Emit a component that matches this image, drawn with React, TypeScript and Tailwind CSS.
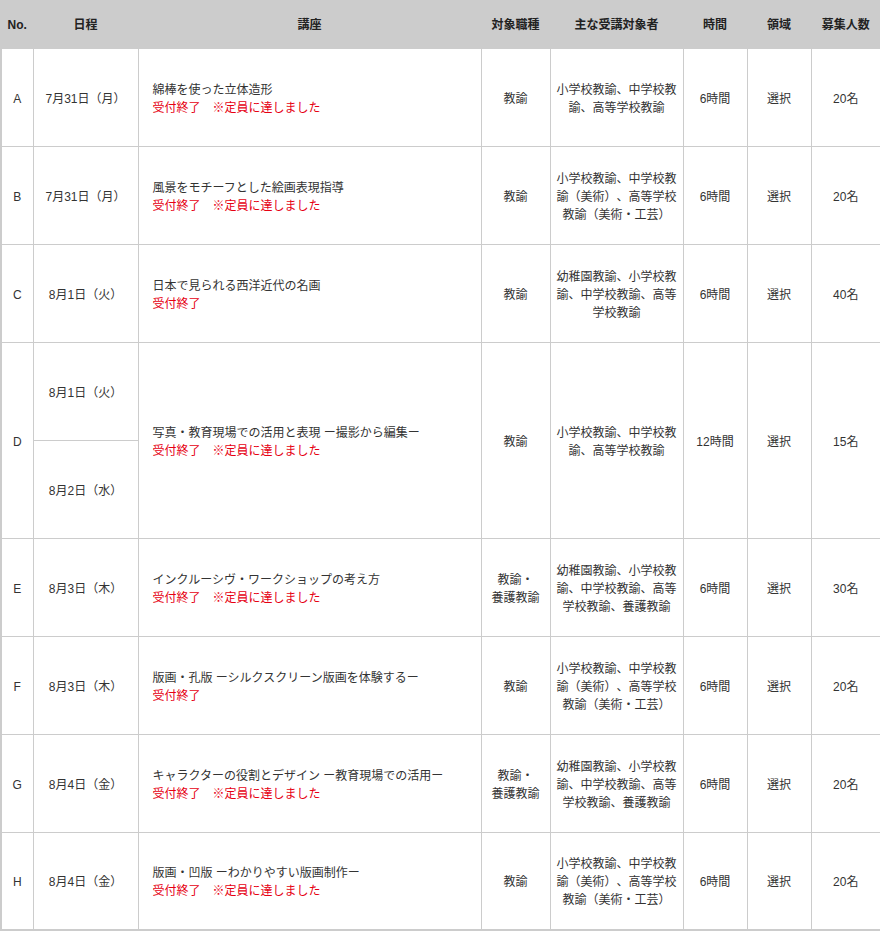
import React from 'react';

type Course = {
  no: string;
  dates: string[];
  title: string;
  status: string;
  jobs: string[];
  targets: string[];
  hours: string;
  area: string;
  capacity: string;
};

const FULL = '受付終了　※定員に達しました';
const CLOSED = '受付終了';

const courses: Course[] = [
  {
    no: 'A',
    dates: ['7月31日（月）'],
    title: '綿棒を使った立体造形',
    status: FULL,
    jobs: ['教諭'],
    targets: ['小学校教諭、中学校教', '諭、高等学校教諭'],
    hours: '6時間',
    area: '選択',
    capacity: '20名',
  },
  {
    no: 'B',
    dates: ['7月31日（月）'],
    title: '風景をモチーフとした絵画表現指導',
    status: FULL,
    jobs: ['教諭'],
    targets: ['小学校教諭、中学校教', '諭（美術）、高等学校', '教諭（美術・工芸）'],
    hours: '6時間',
    area: '選択',
    capacity: '20名',
  },
  {
    no: 'C',
    dates: ['8月1日（火）'],
    title: '日本で見られる西洋近代の名画',
    status: CLOSED,
    jobs: ['教諭'],
    targets: ['幼稚園教諭、小学校教', '諭、中学校教諭、高等', '学校教諭'],
    hours: '6時間',
    area: '選択',
    capacity: '40名',
  },
  {
    no: 'D',
    dates: ['8月1日（火）', '8月2日（水）'],
    title: '写真・教育現場での活用と表現 ー撮影から編集ー',
    status: FULL,
    jobs: ['教諭'],
    targets: ['小学校教諭、中学校教', '諭、高等学校教諭'],
    hours: '12時間',
    area: '選択',
    capacity: '15名',
  },
  {
    no: 'E',
    dates: ['8月3日（木）'],
    title: 'インクルーシヴ・ワークショップの考え方',
    status: FULL,
    jobs: ['教諭・', '養護教諭'],
    targets: ['幼稚園教諭、小学校教', '諭、中学校教諭、高等', '学校教諭、養護教諭'],
    hours: '6時間',
    area: '選択',
    capacity: '30名',
  },
  {
    no: 'F',
    dates: ['8月3日（木）'],
    title: '版画・孔版 ーシルクスクリーン版画を体験するー',
    status: CLOSED,
    jobs: ['教諭'],
    targets: ['小学校教諭、中学校教', '諭（美術）、高等学校', '教諭（美術・工芸）'],
    hours: '6時間',
    area: '選択',
    capacity: '20名',
  },
  {
    no: 'G',
    dates: ['8月4日（金）'],
    title: 'キャラクターの役割とデザイン ー教育現場での活用ー',
    status: FULL,
    jobs: ['教諭・', '養護教諭'],
    targets: ['幼稚園教諭、小学校教', '諭、中学校教諭、高等', '学校教諭、養護教諭'],
    hours: '6時間',
    area: '選択',
    capacity: '20名',
  },
  {
    no: 'H',
    dates: ['8月4日（金）'],
    title: '版画・凹版 ーわかりやすい版画制作ー',
    status: FULL,
    jobs: ['教諭'],
    targets: ['小学校教諭、中学校教', '諭（美術）、高等学校', '教諭（美術・工芸）'],
    hours: '6時間',
    area: '選択',
    capacity: '20名',
  },
];

const headers = ['No.', '日程', '講座', '対象職種', '主な受講対象者', '時間', '領域', '募集人数'];

const cell = 'border border-[#cccccc] text-center align-middle h-[98px] px-[4px] pt-[3px]';

function Lines({ lines }: { lines: string[] }) {
  return (
    <>
      {lines.map((l, i) => (
        <div key={i} className="whitespace-nowrap">{l}</div>
      ))}
    </>
  );
}

export default function App() {
  return (
    <div
      className="w-[880px] bg-white text-[12px] leading-[18px] text-[#333333] [text-spacing-trim:space-all]"
      style={{ fontFamily: '"Liberation Sans", "Noto Sans CJK JP", sans-serif' }}
    >
      <table className="w-[880px] table-fixed border-collapse border-2 border-[#cccccc]">
        <colgroup>
          <col className="w-[32px]" />
          <col className="w-[105px]" />
          <col className="w-[343px]" />
          <col className="w-[69px]" />
          <col className="w-[133px]" />
          <col className="w-[64px]" />
          <col className="w-[64px]" />
          <col className="w-[70px]" />
        </colgroup>
        <thead>
          <tr>
            {headers.map((h) => (
              <th
                key={h}
                className="border border-[#cccccc] bg-[#cccccc] h-[47px] text-center align-middle font-bold text-[#222222] px-[2px]"
              >
                {h}
              </th>
            ))}
          </tr>
        </thead>
        <tbody>
          {courses.map((c) => {
            const span = c.dates.length;
            return (
              <React.Fragment key={c.no}>
                <tr>
                  <td rowSpan={span} className={cell}>{c.no}</td>
                  <td className={cell}>{c.dates[0]}</td>
                  <td rowSpan={span} className="border border-[#cccccc] align-middle text-left pl-[14px] pr-[8px] pt-[3px]">
                    <div>{c.title}</div>
                    <div className="text-[#e60012] whitespace-pre">{c.status}</div>
                  </td>
                  <td rowSpan={span} className={cell}><Lines lines={c.jobs} /></td>
                  <td rowSpan={span} className={cell}><Lines lines={c.targets} /></td>
                  <td rowSpan={span} className={cell}>{c.hours}</td>
                  <td rowSpan={span} className={cell}>{c.area}</td>
                  <td rowSpan={span} className={cell}>{c.capacity}</td>
                </tr>
                {c.dates.slice(1).map((d) => (
                  <tr key={d}>
                    <td className={cell}>{d}</td>
                  </tr>
                ))}
              </React.Fragment>
            );
          })}
        </tbody>
      </table>
    </div>
  );
}
